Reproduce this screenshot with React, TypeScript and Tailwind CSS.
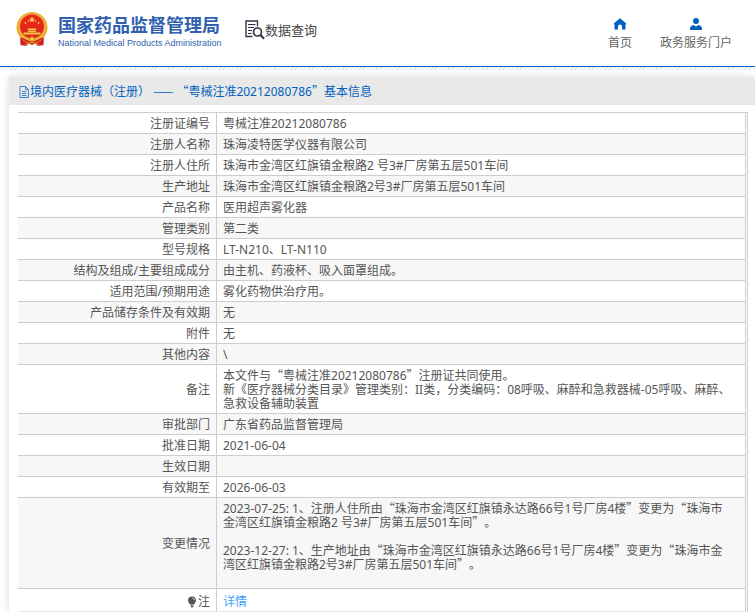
import React from "react";

interface InfoRow {
  label: string;
  lines: string[];
}

const rows: InfoRow[] = [
  { label: "注册证编号", lines: ["粤械注准20212080786"] },
  { label: "注册人名称", lines: ["珠海凌特医学仪器有限公司"] },
  { label: "注册人住所", lines: ["珠海市金湾区红旗镇金粮路2 号3#厂房第五层501车间"] },
  { label: "生产地址", lines: ["珠海市金湾区红旗镇金粮路2号3#厂房第五层501车间"] },
  { label: "产品名称", lines: ["医用超声雾化器"] },
  { label: "管理类别", lines: ["第二类"] },
  { label: "型号规格", lines: ["LT-N210、LT-N110"] },
  { label: "结构及组成/主要组成成分", lines: ["由主机、药液杯、吸入面罩组成。"] },
  { label: "适用范围/预期用途", lines: ["雾化药物供治疗用。"] },
  { label: "产品储存条件及有效期", lines: ["无"] },
  { label: "附件", lines: ["无"] },
  { label: "其他内容", lines: ["\\"] },
  {
    label: "备注",
    lines: [
      "本文件与“粤械注准20212080786”注册证共同使用。",
      "新《医疗器械分类目录》管理类别：II类，分类编码：08呼吸、麻醉和急救器械-05呼吸、麻醉、急救设备辅助装置",
    ],
  },
  { label: "审批部门", lines: ["广东省药品监督管理局"] },
  { label: "批准日期", lines: ["2021-06-04"] },
  { label: "生效日期", lines: [""] },
  { label: "有效期至", lines: ["2026-06-03"] },
  {
    label: "变更情况",
    lines: [
      "2023-07-25: 1、注册人住所由“珠海市金湾区红旗镇永达路66号1号厂房4楼”变更为“珠海市\n金湾区红旗镇金粮路2 号3#厂房第五层501车间”。",
      "",
      "2023-12-27: 1、生产地址由“珠海市金湾区红旗镇永达路66号1号厂房4楼”变更为“珠海市金\n湾区红旗镇金粮路2号3#厂房第五层501车间”。",
      "",
    ],
  },
];

// Curly quotes and dashes take the full-width shapes of the Chinese font
const Text = ({ children }: { children: string }) => (
  <>
    {children.split(/([“”—]+)/).map((part, i) =>
      i % 2 ? (
        <span key={i} className="font-['Noto_Sans_CJK_SC',sans-serif] leading-[8px]">{part}</span>
      ) : (
        part
      )
    )}
  </>
);

const Emblem = () => (
  <svg viewBox="0 0 32 34" className="h-[34px] w-8 shrink-0" aria-hidden="true">
    <path d="M4 23 4.500 33 10 34 13 31.500 16 33 19 31.500 22 34 27.500 33 28 23Z" fill="#d3221c" />
    <circle cx="16" cy="15.500" r="15.500" fill="#f0b53c" />
    <circle cx="16" cy="15.500" r="14.200" fill="none" stroke="#e09a2c" strokeWidth="0.700" />
    <circle cx="16" cy="14.500" r="12" fill="#e5261d" />
    <path d="m16 4.500.9 2.100 2.200.2-1.700 1.500.5 2.200-1.900-1.200-1.900 1.200.5-2.200-1.700-1.500 2.200-.2Z" fill="#f6c945" />
    <g fill="#f6c945">
      <circle cx="9.500" cy="11" r="0.900" />
      <circle cx="12.500" cy="9" r="0.800" />
      <circle cx="19.500" cy="9" r="0.800" />
      <circle cx="22.500" cy="11" r="0.900" />
      <path d="m11 18 1.500-1.500h7L21 18ZM12 18.500h8V20h-8ZM7.500 20.500h17v2h-17Z" />
    </g>
    <path d="M3.500 23.500c4 .5 7 1 9 2.500h7c2-1.500 5-2 9-2.500-2 4-5.500 6.500-9 7.300h-7c-3.500-.8-7-3.300-9-7.300Z" fill="#efb33a" />
    <path d="M5 26.500c4 0 5.500 4 11 4s7-4 11-4" fill="none" stroke="#d3221c" strokeWidth="1.600" />
    <path d="M9 32.500c3-.5 4-2 7-2s4 1.500 7 2" fill="none" stroke="#efb33a" strokeWidth="0.800" />
    <circle cx="16" cy="27" r="2.300" fill="#f6c945" stroke="#cf761d" strokeWidth="0.600" />
  </svg>
);

const SearchDocIcon = () => (
  <svg viewBox="0 0 20 20" className="h-5 w-5" fill="none" stroke="#34364a" aria-hidden="true">
    <path d="M12.500 6.500V1H1v15.500h6.500" strokeWidth="1.400" />
    <path d="M3 4.500h7.500M3 7.500h6M3 10.500h4M3 13.500h3.500" strokeWidth="1.100" />
    <circle cx="12.500" cy="12" r="4" strokeWidth="1.700" />
    <path d="m15.300 14.800 3.700 4" strokeWidth="2.200" />
  </svg>
);

const HomeIcon = () => (
  <svg viewBox="0 0 12 12" className="h-3 w-3" fill="#0061bf" aria-hidden="true">
    <path d="M6 .3 12 5.200V6.600H11.500V11.500H8V8.500a2 2 0 0 0-4 0v3H.5V6.600H0V5.200Z" />
  </svg>
);

const UserIcon = () => (
  <svg viewBox="0 0 12 12" className="h-3 w-3" fill="#0061bf" aria-hidden="true">
    <circle cx="6" cy="3" r="3" />
    <path d="M0 12V10.500C0 8.500 1.500 7.500 3.800 7L6 8.500 8.200 7C10.500 7.500 12 8.500 12 10.500V12Z" />
  </svg>
);

const FileIcon = () => (
  <svg viewBox="0 0 11 12" className="h-3 w-[11px]" fill="none" stroke="#3c7fcc" aria-hidden="true">
    <path d="M1 .5h5.500l3 3v8H1ZM6.500.5v3h3M3 5.500h4.500M3 7.500h4.500M3 9.500h4.500" />
  </svg>
);

const BulbIcon = () => (
  <svg viewBox="0 0 10 12" className="inline-block h-3 w-[10px]" aria-hidden="true">
    <path d="M5 .5a4 4 0 0 0-4 4c0 2 1.700 3 2.300 4.300h3.400C7.300 7.500 9 6.500 9 4.500a4 4 0 0 0-4-4ZM3.500 9.500h3v1L5.500 11.500h-1l-1-1Z" fill="#555" />
    <path d="M5.500 2a2.300 2.300 0 0 1 2 2" fill="none" stroke="#fff" strokeWidth="0.800" />
  </svg>
);

const Header = () => (
  <header className="flex h-[67px] items-start border-b border-[#0061bf] bg-white pt-3 pr-[23px] pl-4">
    <a href="#" className="flex gap-[10px] text-[#2f5fae]">
      <Emblem />
      <span className="flex w-[161px] flex-col pt-[3px]">
        <span className="text-[18px] leading-5 font-bold whitespace-nowrap">国家药品监督管理局</span>
        <span className="font-['Liberation_Sans',sans-serif] text-[9px] leading-4 whitespace-nowrap">
          National Medical Products Administration
        </span>
      </span>
    </a>
    <a href="#" className="mt-2 ml-[26px] flex items-center text-[13px] leading-5 text-[#444]">
      <SearchDocIcon />
      数据查询
    </a>
    <nav className="ml-auto flex gap-7 pt-[6px] leading-[18px] text-[#666]">
      <a href="#" className="flex flex-col items-center gap-1">
        <HomeIcon />
        首页
      </a>
      <a href="#" className="flex flex-col items-center gap-1">
        <UserIcon />
        政务服务门户
      </a>
    </nav>
  </header>
);

export default function App() {
  return (
    <div className="overflow-hidden bg-white font-['Noto_Sans','Noto_Sans_CJK_SC',sans-serif] text-xs text-[#555] [text-spacing-trim:space-all]">
      <Header />
      <div className="h-[3px] bg-[repeating-linear-gradient(135deg,#e2e2e2_0px,#e2e2e2_1px,#fff_1px,#fff_3px)]" />
      <main className="mt-[7px] ml-[9px] bg-white shadow-[0_0_8px_rgba(0,0,0,0.15)]">
        <h1 className="flex h-7 items-center bg-[#e9e9e9] pt-0.5 pl-[10px] text-[#0061bf]">
          <FileIcon />
          <span>
            <Text>境内医疗器械（注册） —— “粤械注准20212080786”基本信息</Text>
          </span>
        </h1>
        <div className="mt-[7px] mr-[7px] ml-[9px] border-t border-r border-[#cdcdcd] pr-px">
          <table className="w-full border-separate border-spacing-0 border-r border-[#cdcdcd] leading-[14px]">
            <tbody>
              {rows.map((row) => (
                <tr key={row.label} className="even:bg-[#f7f7f7]">
                  <th scope="row" className="w-[199px] border-r border-b border-[#cdcdcd] pt-1 pr-[6px] pb-0.5 text-right font-normal">
                    {row.label}
                  </th>
                  <td className="border-b border-[#cdcdcd] pt-1 pr-2 pb-0.5 pl-[6px]">
                    {row.lines.map((line, i) => (
                      <p key={i} className="min-h-[14px] whitespace-pre-line">
                        <Text>{line}</Text>
                      </p>
                    ))}
                  </td>
                </tr>
              ))}
              <tr>
                <th scope="row" className="border-r border-b border-[#cdcdcd] border-b-[#e8e8e8] pt-[6px] pr-[6px] pb-0.5 text-right font-normal">
                  <span className="flex items-center justify-end">
                    <BulbIcon />
                    <span className="ml-px">注</span>
                  </span>
                </th>
                <td className="border-b border-[#e8e8e8] pt-[6px] pb-0.5 pl-[6px]">
                  <a href="#" className="text-[#409eff]">详情</a>
                </td>
              </tr>
            </tbody>
          </table>
        </div>
      </main>
    </div>
  );
}
